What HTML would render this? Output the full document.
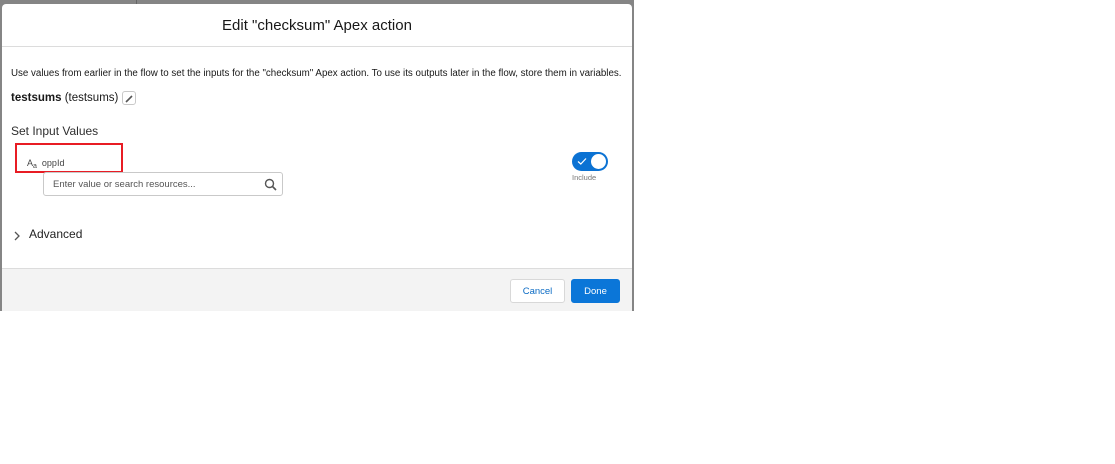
<!DOCTYPE html>
<html><head><meta charset="utf-8"><style>
*{box-sizing:border-box;margin:0;padding:0}
body{width:1115px;height:464px;background:#fff;font-family:"Liberation Sans",sans-serif;position:relative;overflow:hidden;color:#181818}
.bg{position:absolute;left:0;top:0;width:634px;height:311px;background:#858585}
.modal{position:absolute;left:2px;top:4px;width:630px;height:307px;background:#fff;border-radius:4px 4px 0 0;overflow:hidden}
.hdr{height:43px;border-bottom:1px solid #dcdcdc;text-align:center;font-size:15px;line-height:43px;color:#181818}
.desc{position:absolute;left:9px;top:64px;font-size:9.75px;color:#181818;white-space:nowrap}
.name{position:absolute;left:9px;top:88px;font-size:11.5px}
.pen{position:absolute;left:120px;top:87px;width:14px;height:14px;border:1px solid #c9c9c9;border-radius:3px;background:#fff}
.siv{position:absolute;left:9px;top:120px;font-size:12px;color:#2e2e2e}
.redbox{position:absolute;left:13px;top:139px;width:108px;height:30px;border:2px solid #e81c24}
.lbl{position:absolute;left:25px;top:154px;font-size:9px;color:#444}
.inp{position:absolute;left:41px;top:168px;width:240px;height:24px;border:1px solid #c9c9c9;border-radius:3px;font-size:9.5px;color:#555;padding:6px 0 0 9px}
.tog{position:absolute;left:570px;top:148px;width:36px;height:19px;border-radius:10px;background:#0b72d3}
.knob{position:absolute;right:2px;top:2px;width:15px;height:15px;border-radius:50%;background:#fff}
.inc{position:absolute;left:570px;top:169px;font-size:7.5px;color:#777}
.adv{position:absolute;left:27px;top:223px;font-size:12px;color:#222}
.ftr{position:absolute;left:0;top:264px;width:630px;height:43px;background:#f3f3f3;border-top:1px solid #dcdcdc}
.btn{position:absolute;top:10px;height:24px;border-radius:3px;font-size:9.5px;text-align:center;line-height:24px}
.cancel{left:508px;width:55px;border:1px solid #d8d8d8;background:#fff;color:#0b6bc4}
.done{left:569px;width:49px;background:#0b76d8;color:#fff;border:1px solid #0b76d8}
</style></head><body>
<div class="bg"></div>
<div style="position:absolute;left:136px;top:0;width:1px;height:4px;background:#666"></div>
<div class="modal">
<div class="hdr">Edit "checksum" Apex action</div>
<div class="desc">Use values from earlier in the flow to set the inputs for the "checksum" Apex action. To use its outputs later in the flow, store them in variables.</div>
<div class="name"><b>testsums</b> (testsums)</div>
<div class="pen"><svg width="12" height="12" viewBox="0 0 12 12"><path d="M3.5 8.5 L9 3 M3 9 L4 8" stroke="#555" stroke-width="1.6"/></svg></div>
<div class="siv">Set Input Values</div>
<div class="redbox"></div>
<div class="lbl">A<span style="font-size:7px;vertical-align:-2px">a</span>&nbsp; oppId</div>
<div class="inp">Enter value or search resources...
<svg style="position:absolute;right:5px;top:5px" width="13" height="13" viewBox="0 0 13 13"><circle cx="5.5" cy="5.5" r="4" fill="none" stroke="#555" stroke-width="1.4"/><path d="M8.5 8.5 L12 12" stroke="#555" stroke-width="1.6"/></svg></div>
<div class="tog"><svg style="position:absolute;left:5px;top:5px" width="10" height="9" viewBox="0 0 10 9"><path d="M1 4.5 L3.8 7 L9 1.5" fill="none" stroke="#fff" stroke-width="1.2"/></svg><div class="knob"></div></div>
<div class="inc">Include</div>
<svg style="position:absolute;left:11px;top:226px" width="8" height="12" viewBox="0 0 8 12"><path d="M2 2 L6 6 L2 10" fill="none" stroke="#555" stroke-width="1.3"/></svg>
<div class="adv">Advanced</div>
<div class="ftr"><div class="btn cancel">Cancel</div><div class="btn done">Done</div></div>
</div>
</body></html>
